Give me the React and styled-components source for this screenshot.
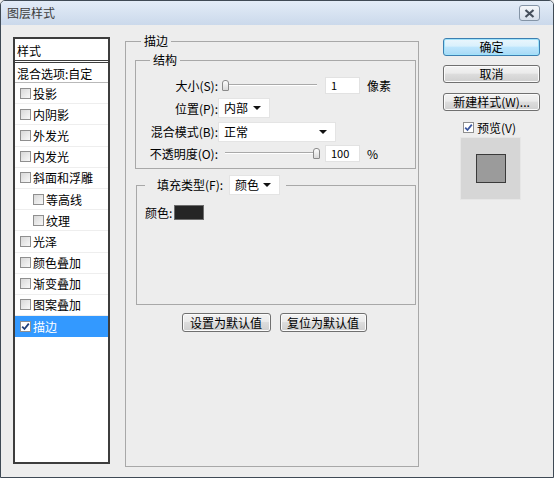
import React from "react";
import styled, { createGlobalStyle } from "styled-components";

const GlobalStyle = createGlobalStyle`
  html, body {
    margin: 0;
    padding: 0;
    background: #ededed;
  }
  body {
    font-family: "Noto Sans CJK SC", "Liberation Sans", sans-serif;
    font-size: 12px;
    color: #000;
  }
`;

const Window = styled.div`
  width: 554px;
  height: 478px;
  box-sizing: border-box;
  border: 1px solid #3f4a55;
  border-radius: 5px 5px 0 0;
  background: #ededed;
  display: flex;
  flex-direction: column;
  overflow: hidden;
`;

const TitleBar = styled.div`
  flex: none;
  height: 24px;
  display: flex;
  align-items: center;
  justify-content: space-between;
  padding: 0 13px 0 6px;
  background: linear-gradient(#e3ecf7, #cbd9eb);
  color: #3c3c3c;
  line-height: 16px;
`;

const CloseButton = styled.div`
  width: 21px;
  height: 16px;
  box-sizing: border-box;
  border: 1px solid #8494a6;
  border-radius: 3px;
  background: linear-gradient(#f4f7fb, #d6dfea);
  display: flex;
  align-items: center;
  justify-content: center;
`;

const Body = styled.div`
  flex: 1;
  display: flex;
  align-items: flex-start;
  padding: 8px 0 0 12px;
`;

/* ---------- left style list ---------- */

const StyleList = styled.div`
  width: 97px;
  height: 427px;
  margin-top: 4px;
  box-sizing: border-box;
  border: 2px solid #3d3d3d;
  background: #fff;
  flex: none;
`;

const ListHeader = styled.div`
  height: 21px;
  line-height: 23px;
  padding-left: 2px;
  border-bottom: 3px double #3d3d3d;
`;

const BlendRow = styled.div`
  height: 19px;
  line-height: 22px;
  padding-left: 2px;
  border-bottom: 1px solid #b9b9b9;
  white-space: nowrap;
`;

const ListItem = styled.div`
  height: 20.2px;
  display: flex;
  align-items: center;
  gap: 2px;
  padding-left: ${(p) => (p.$indent ? 18 : 5)}px;
  border-bottom: 1px solid ${(p) => (p.$selected ? "#3399ff" : "#eeeeee")};
  background: ${(p) => (p.$selected ? "#3399ff" : "transparent")};
  color: ${(p) => (p.$selected ? "#fff" : "#000")};
  white-space: nowrap;
`;

const Box = styled.span`
  width: 11px;
  height: 11px;
  box-sizing: border-box;
  flex: none;
  border: 1px solid #8f8f8f;
  background: ${(p) =>
    p.$light ? "#fff" : "linear-gradient(135deg, #d8d8d8, #f8f8f8)"};
  display: inline-flex;
  align-items: center;
  justify-content: center;
`;

function CheckBox({ checked, light, tone = "#1f3f7a" }) {
  return (
    <Box $light={light || checked}>
      {checked && (
        <svg width="9" height="9" viewBox="0 0 9 9">
          <path d="M1.2 4.6 L3.5 7 L7.8 1.6" fill="none" stroke={tone} strokeWidth="1.8" />
        </svg>
      )}
    </Box>
  );
}

/* ---------- middle settings ---------- */

const Group = styled.fieldset`
  margin: ${(p) => p.$margin || "0"};
  padding: 0;
  min-width: 0;
  box-sizing: border-box;
  width: ${(p) => p.$width}px;
  height: ${(p) => (p.$height ? `${p.$height}px` : "auto")};
  border: 1px solid #a8a8a8;
  flex: none;
`;

const Legend = styled.legend`
  margin-left: ${(p) => p.$offset}px;
  padding: ${(p) => p.$pad || "0 3px"};
  line-height: 16px;
  display: flex;
  align-items: center;
  gap: 6px;
`;

const Rows = styled.div`
  padding: 6px 0 5px;
`;

const Row = styled.div`
  height: ${(p) => p.$h}px;
  display: flex;
  align-items: center;
`;

const Label = styled.span`
  width: 82px;
  flex: none;
  text-align: right;
  white-space: nowrap;
`;

const Slider = styled.div`
  position: relative;
  width: 98px;
  height: 12px;
  margin-left: 4px;
  display: flex;
  align-items: center;
  justify-content: ${(p) => (p.$end ? "flex-end" : "flex-start")};
  &::before {
    content: "";
    position: absolute;
    left: 3px;
    right: 3px;
    top: 5px;
    height: 1px;
    background: #a9a9a9;
    box-shadow: 0 1px 0 #fff;
  }
`;

const Thumb = styled.span`
  position: relative;
  width: 7px;
  height: 11px;
  box-sizing: border-box;
  border: 1px solid #8a8a8a;
  border-radius: 3px 3px 1px 1px;
  background: linear-gradient(#fdfdfd, #d9d9d9);
`;

const NumberField = styled.span`
  width: 35px;
  height: 17px;
  margin-left: 5px;
  box-sizing: border-box;
  border: 1px solid #e2e2e2;
  background: #fff;
  padding-left: 5px;
  font-size: 11px;
  line-height: 15px;
`;

const Unit = styled.span`
  margin-left: 7px;
`;

const Select = styled.span`
  width: ${(p) => p.$width}px;
  height: 20px;
  box-sizing: border-box;
  border: 1px solid #e4e4e4;
  background: #fff;
  padding: 0 8px 0 5px;
  display: inline-flex;
  align-items: center;
  justify-content: space-between;
  line-height: 18px;
  &::after {
    content: "";
    border-left: 4px solid transparent;
    border-right: 4px solid transparent;
    border-top: 4px solid #111;
  }
`;

const ColorRow = styled.div`
  display: flex;
  align-items: center;
  gap: 2px;
  padding: 10px 0 0 8px;
  height: 15px;
`;

const Swatch = styled.span`
  width: 30px;
  height: 15px;
  box-sizing: border-box;
  border: 1px solid #6c6c6c;
  background: #252525;
`;

const DefaultsBar = styled.div`
  display: flex;
  justify-content: center;
  gap: 9px;
  margin-top: 8px;
  padding-left: 4px;
`;

const Button = styled.div`
  width: ${(p) => p.$width || 97}px;
  height: ${(p) => p.$height || 18}px;
  box-sizing: border-box;
  border: 1px solid ${(p) => (p.$primary ? "#3c7fb1" : "#707070")};
  border-radius: 3px;
  background: ${(p) =>
    p.$primary
      ? "linear-gradient(#eaf6fd 0%, #d9f0fc 45%, #bee6fd 50%, #a7d9f5 100%)"
      : "linear-gradient(#f3f3f3 0%, #ebebeb 45%, #dddddd 50%, #cfcfcf 100%)"};
  box-shadow: inset 0 0 0 1px ${(p) => (p.$primary ? "#9fe3fb" : "#fbfbfb")};
  display: flex;
  align-items: center;
  justify-content: center;
  line-height: 16px;
  white-space: nowrap;
  margin-bottom: ${(p) => p.$gapBelow || 0}px;
`;

/* ---------- right column ---------- */

const Side = styled.div`
  width: 97px;
  margin: 5px 0 0 24px;
  display: flex;
  flex-direction: column;
  flex: none;
`;

const PreviewToggle = styled.div`
  height: 18px;
  margin-top: 7px;
  padding-left: 20px;
  display: flex;
  align-items: center;
  gap: 3px;
`;

const PreviewBox = styled.div`
  width: 61px;
  height: 63px;
  margin: 1px 0 0 17px;
  box-sizing: border-box;
  border: 1px solid #e6e6e6;
  background: #d6d6d6;
  display: flex;
  align-items: center;
  justify-content: center;
`;

const PreviewSquare = styled.div`
  width: 30px;
  height: 29px;
  box-sizing: border-box;
  border: 1px solid #3a3a3a;
  background: #9b9b9b;
`;

const effects = [
  { name: "投影" },
  { name: "内阴影" },
  { name: "外发光" },
  { name: "内发光" },
  { name: "斜面和浮雕" },
  { name: "等高线", indent: true },
  { name: "纹理", indent: true },
  { name: "光泽" },
  { name: "颜色叠加" },
  { name: "渐变叠加" },
  { name: "图案叠加" },
  { name: "描边", checked: true, selected: true },
];

export default function App() {
  return (
    <>
      <GlobalStyle />
      <Window>
        <TitleBar>
          <span>图层样式</span>
          <CloseButton>
            <svg width="11" height="9" viewBox="0 0 11 9">
              <path d="M1.5 1 L9.5 8 M9.5 1 L1.5 8" stroke="#46505c" strokeWidth="2.2" />
            </svg>
          </CloseButton>
        </TitleBar>

        <Body>
          <StyleList>
            <ListHeader>样式</ListHeader>
            <BlendRow>混合选项:自定</BlendRow>
            {effects.map((item) => (
              <ListItem key={item.name} $indent={item.indent} $selected={item.selected}>
                <CheckBox checked={item.checked} />
                <span>{item.name}</span>
              </ListItem>
            ))}
          </StyleList>

          <Group $width={294} $height={434} $margin="0 0 0 15px">
            <Legend $offset={15}>描边</Legend>

            <Group $width={281} $margin="3px 0 0 9px">
              <Legend $offset={14}>结构</Legend>
              <Rows>
                <Row $h={22}>
                  <Label>大小(S):</Label>
                  <Slider>
                    <Thumb />
                  </Slider>
                  <NumberField>1</NumberField>
                  <Unit>像素</Unit>
                </Row>
                <Row $h={24}>
                  <Label>位置(P):</Label>
                  <Select $width={52}>内部</Select>
                </Row>
                <Row $h={23}>
                  <Label>混合模式(B):</Label>
                  <Select $width={118}>正常</Select>
                </Row>
                <Row $h={20}>
                  <Label>不透明度(O):</Label>
                  <Slider $end>
                    <Thumb />
                  </Slider>
                  <NumberField>100</NumberField>
                  <Unit>%</Unit>
                </Row>
              </Rows>
            </Group>

            <Group $width={280} $height={130} $margin="6px 0 0 10px">
              <Legend $offset={8} $pad="0 6px 0 12px">
                <span>填充类型(F):</span>
                <Select $width={51}>颜色</Select>
              </Legend>
              <ColorRow>
                <span>颜色:</span>
                <Swatch />
              </ColorRow>
            </Group>

            <DefaultsBar>
              <Button $width={89} $height={19}>设置为默认值</Button>
              <Button $width={87} $height={19}>复位为默认值</Button>
            </DefaultsBar>
          </Group>

          <Side>
            <Button $primary $gapBelow={9}>确定</Button>
            <Button $gapBelow={10}>取消</Button>
            <Button>新建样式(W)...</Button>
            <PreviewToggle>
              <CheckBox checked light tone="#3a56a0" />
              <span>预览(V)</span>
            </PreviewToggle>
            <PreviewBox>
              <PreviewSquare />
            </PreviewBox>
          </Side>
        </Body>
      </Window>
    </>
  );
}
